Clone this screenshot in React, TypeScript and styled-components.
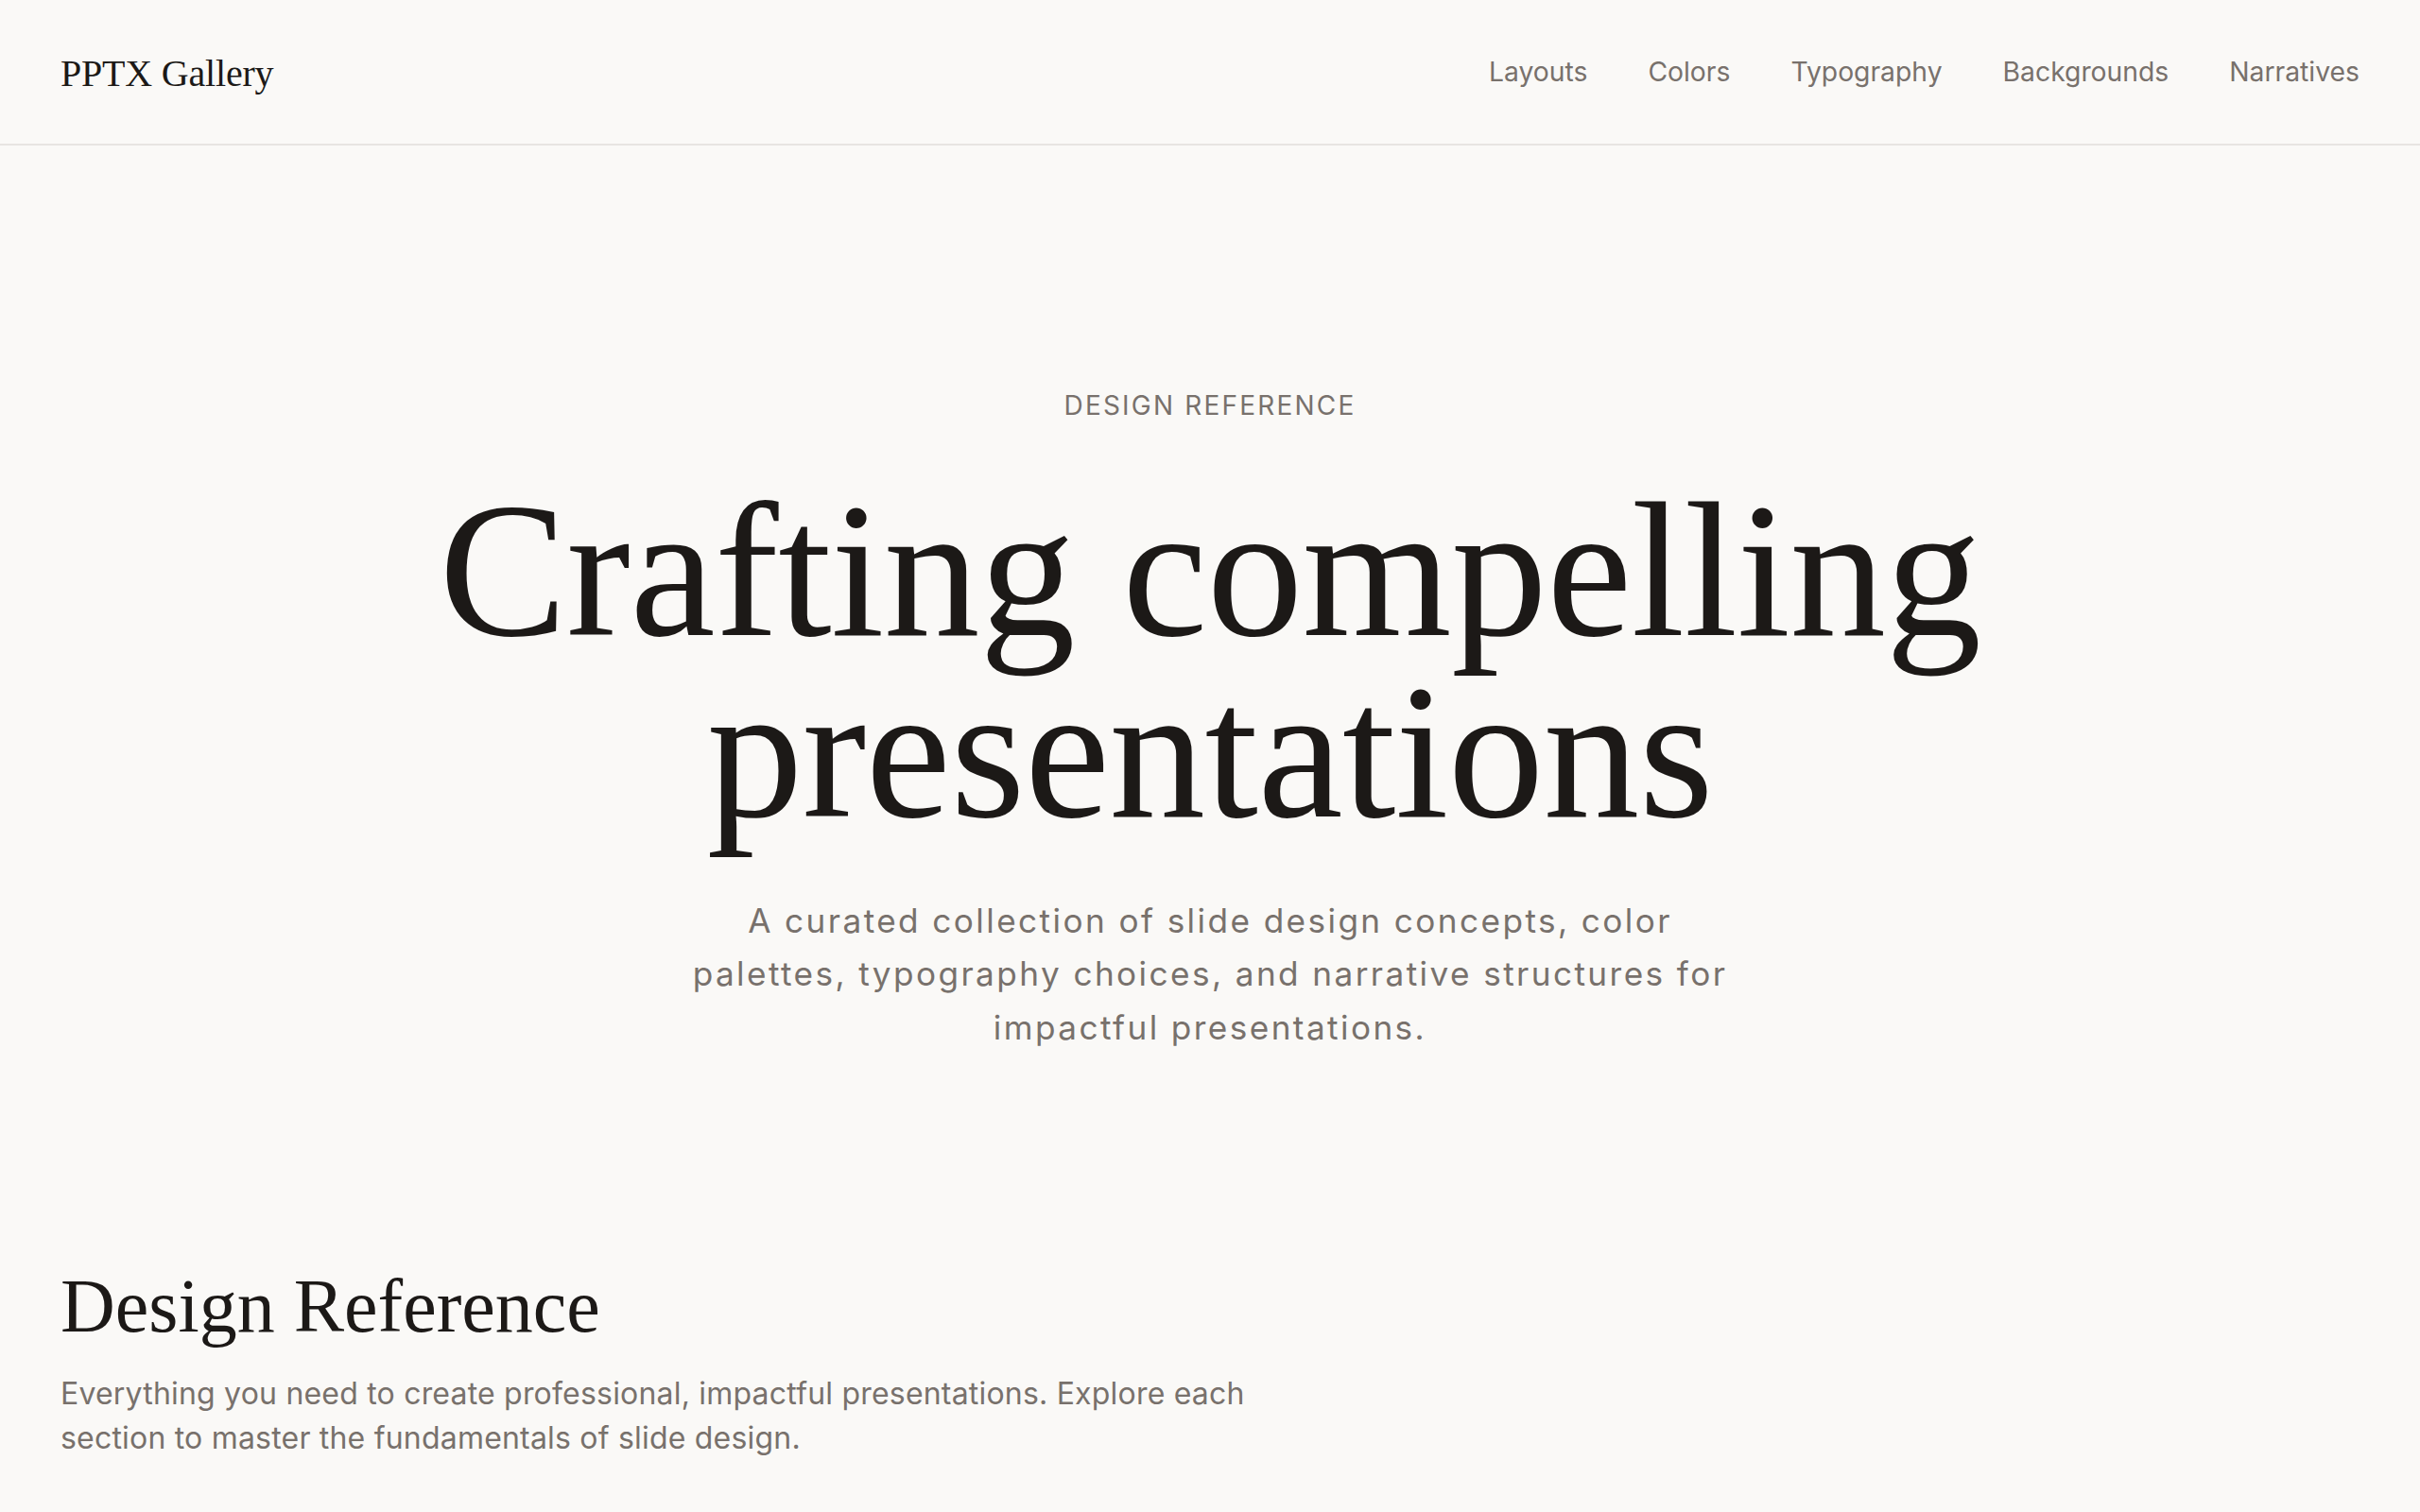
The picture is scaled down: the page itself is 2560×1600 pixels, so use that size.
import React from "react";
import styled, { createGlobalStyle } from "styled-components";

const GlobalStyle = createGlobalStyle`
  html, body {
    margin: 0;
    padding: 0;
    background: #faf9f7;
  }
  body {
    font-family: Inter, "Liberation Sans", sans-serif;
    color: #1c1917;
    -webkit-font-smoothing: antialiased;
  }
  * { box-sizing: border-box; }
`;

const Page = styled.div`
  min-height: 1600px;
  background: #faf9f7;
`;

const Header = styled.header`
  height: 154px;
  padding: 0 64px;
  display: flex;
  align-items: center;
  justify-content: space-between;
  border-bottom: 2px solid #e7e5e2;
`;

const Logo = styled.a`
  font-family: "Liberation Serif", "Times New Roman", serif;
  font-size: 40px;
  line-height: 1;
  padding-top: 4px;
  color: #1c1917;
  text-decoration: none;
  letter-spacing: -0.2px;
`;

const Nav = styled.nav`
  display: flex;
  align-items: center;
  gap: 64px;
`;

const NavLink = styled.a`
  font-family: Inter, "Liberation Sans", sans-serif;
  font-size: 28.3px;
  line-height: 1;
  color: #78716c;
  text-decoration: none;
`;

const Hero = styled.section`
  padding: 254px 64px 0;
  display: flex;
  flex-direction: column;
  align-items: center;
  text-align: center;
`;

const Eyebrow = styled.div`
  font-family: Inter, "Liberation Sans", sans-serif;
  font-size: 28px;
  line-height: 42px;
  letter-spacing: 2.2px;
  text-transform: uppercase;
  color: #78716c;
`;

const Headline = styled.h1`
  margin: 58px 0 0;
  font-family: "Liberation Serif", "Times New Roman", serif;
  font-weight: 400;
  font-size: 203px;
  line-height: 192px;
  color: #1c1917;
  letter-spacing: -0.5px;
`;

const Lead = styled.p`
  margin: 54px 0 0;
  max-width: 1128px;
  font-family: Inter, "Liberation Sans", sans-serif;
  font-size: 35.2px;
  line-height: 56.32px;
  letter-spacing: 2.4px;
  color: #78716c;
`;

const Section = styled.section`
  padding: 221px 64px 0;
`;

const SectionTitle = styled.h2`
  margin: 0;
  font-family: "Liberation Serif", "Times New Roman", serif;
  font-weight: 400;
  font-size: 80px;
  line-height: 93.6px;
  color: #1c1917;
`;

const SectionText = styled.p`
  margin: 21px 0 0;
  max-width: 1280px;
  font-family: Inter, "Liberation Sans", sans-serif;
  font-size: 32px;
  line-height: 47.4px;
  letter-spacing: 0.2px;
  color: #78716c;
`;

const navItems = ["Layouts", "Colors", "Typography", "Backgrounds", "Narratives"];

export default function App() {
  return (
    <Page>
      <GlobalStyle />
      <Header>
        <Logo href="#">PPTX Gallery</Logo>
        <Nav>
          {navItems.map((item) => (
            <NavLink key={item} href="#">
              {item}
            </NavLink>
          ))}
        </Nav>
      </Header>
      <Hero>
        <Eyebrow>Design Reference</Eyebrow>
        <Headline>
          Crafting compelling
          <br />
          presentations
        </Headline>
        <Lead>
          A curated collection of slide design concepts, color palettes, typography choices, and
          narrative structures for impactful presentations.
        </Lead>
      </Hero>
      <Section>
        <SectionTitle>Design Reference</SectionTitle>
        <SectionText>
          Everything you need to create professional, impactful presentations. Explore each section
          to master the fundamentals of slide design.
        </SectionText>
      </Section>
    </Page>
  );
}
